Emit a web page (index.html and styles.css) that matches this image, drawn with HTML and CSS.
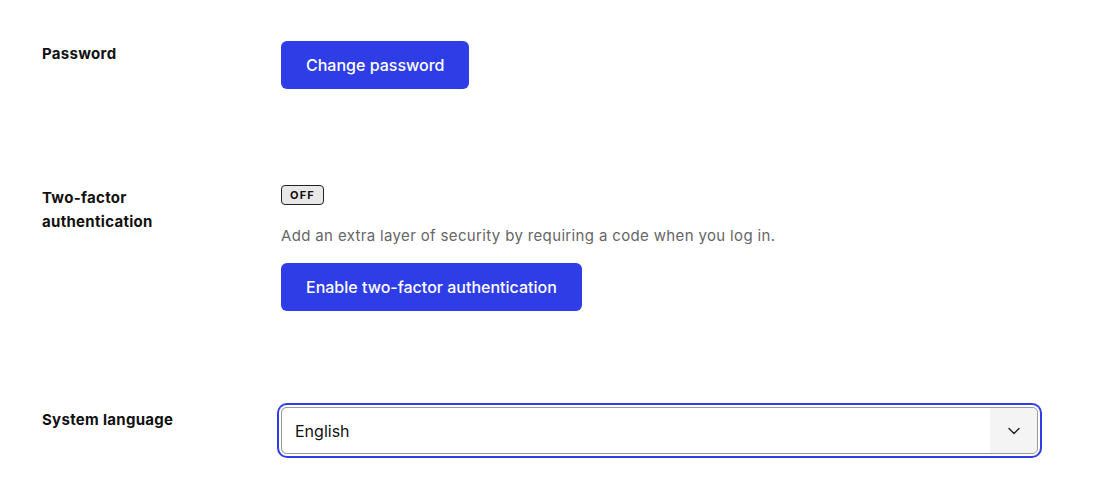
FILE: index.html
```html
<!DOCTYPE html>
<html lang="en">
<head>
    <meta charset="UTF-8">
    <meta name="viewport" content="width=device-width, initial-scale=1.0">
    <title>Account settings</title>
    <link rel="stylesheet" href="styles.css">
</head>
<body>

    <div class="settings">
        <div class="setting-row">
            <div class="setting-label">Password</div>
            <div class="setting-body">
                <button class="primary-button">Change password</button>
            </div>
        </div>

        <div class="setting-row">
            <div class="setting-label">Two-factor<br>authentication</div>
            <div class="setting-body">
                <span class="status-badge">OFF</span>
                <p class="setting-hint">Add an extra layer of security by requiring a code when you log in.</p>
                <button class="primary-button">Enable two-factor authentication</button>
            </div>
        </div>

        <div class="setting-row">
            <div class="setting-label">System language</div>
            <div class="setting-body">
                <div class="select-box">
                    <span class="select-value">English</span>
                    <span class="select-arrow">
                        <svg width="14" height="14" viewBox="0 0 14 14" fill="none">
                            <path d="M2 4.5 L7 9.5 L12 4.5" stroke="#222" stroke-width="1.4" stroke-linecap="round" stroke-linejoin="round"/>
                        </svg>
                    </span>
                </div>
            </div>
        </div>
    </div>

</body>
</html>
```

FILE: styles.css
```css
body {
    margin: 0;
    font-family: Inter, "Open Sans", sans-serif;
    background-color: #fff;
    color: #111;
}
.settings {
    padding: 41px 56px 40px 42px;
}
.setting-row {
    display: grid;
    grid-template-columns: 239px 1fr;
    padding-bottom: 96px;
}
.setting-row:last-child {
    padding-bottom: 0;
}
.setting-label {
    padding-top: 1px;
    font-size: 15px;
    font-weight: 700;
    line-height: 24px;
    letter-spacing: 0.3px;
    color: #111;
}
.setting-body {
    display: flex;
    flex-direction: column;
    align-items: flex-start;
}
.primary-button {
    background-color: #2e3de6;
    color: #fff;
    border: none;
    border-radius: 6px;
    height: 48px;
    padding: 0 25px;
    font-family: inherit;
    font-size: 16px;
    font-weight: 500;
    cursor: pointer;
}
.status-badge {
    display: inline-block;
    box-sizing: border-box;
    height: 20px;
    padding: 0 8px;
    border: 1px solid #222;
    border-radius: 4px;
    background-color: #e8e8e8;
    font-size: 11px;
    font-weight: 700;
    line-height: 18px;
    letter-spacing: 1.2px;
    color: #111;
}
.setting-hint {
    margin: 21px 0 17px;
    font-size: 15px;
    line-height: 20px;
    letter-spacing: 0.35px;
    color: #666;
}
/* селект с фокус-кольцом */
.select-box {
    box-sizing: border-box;
    width: 100%;
    height: 47px;
    display: flex;
    align-items: stretch;
    border: 1px solid #9a9a9a;
    border-radius: 6px;
    box-shadow: 0 0 0 2px #fff, 0 0 0 4px #2e3de6;
}
.select-value {
    flex: 1;
    display: flex;
    align-items: center;
    padding-left: 13px;
    font-size: 16px;
    color: #111;
}
.select-arrow {
    width: 47px;
    display: flex;
    align-items: center;
    justify-content: center;
    border-radius: 0 5px 5px 0;
    background-color: #f4f4f4;
}
```
